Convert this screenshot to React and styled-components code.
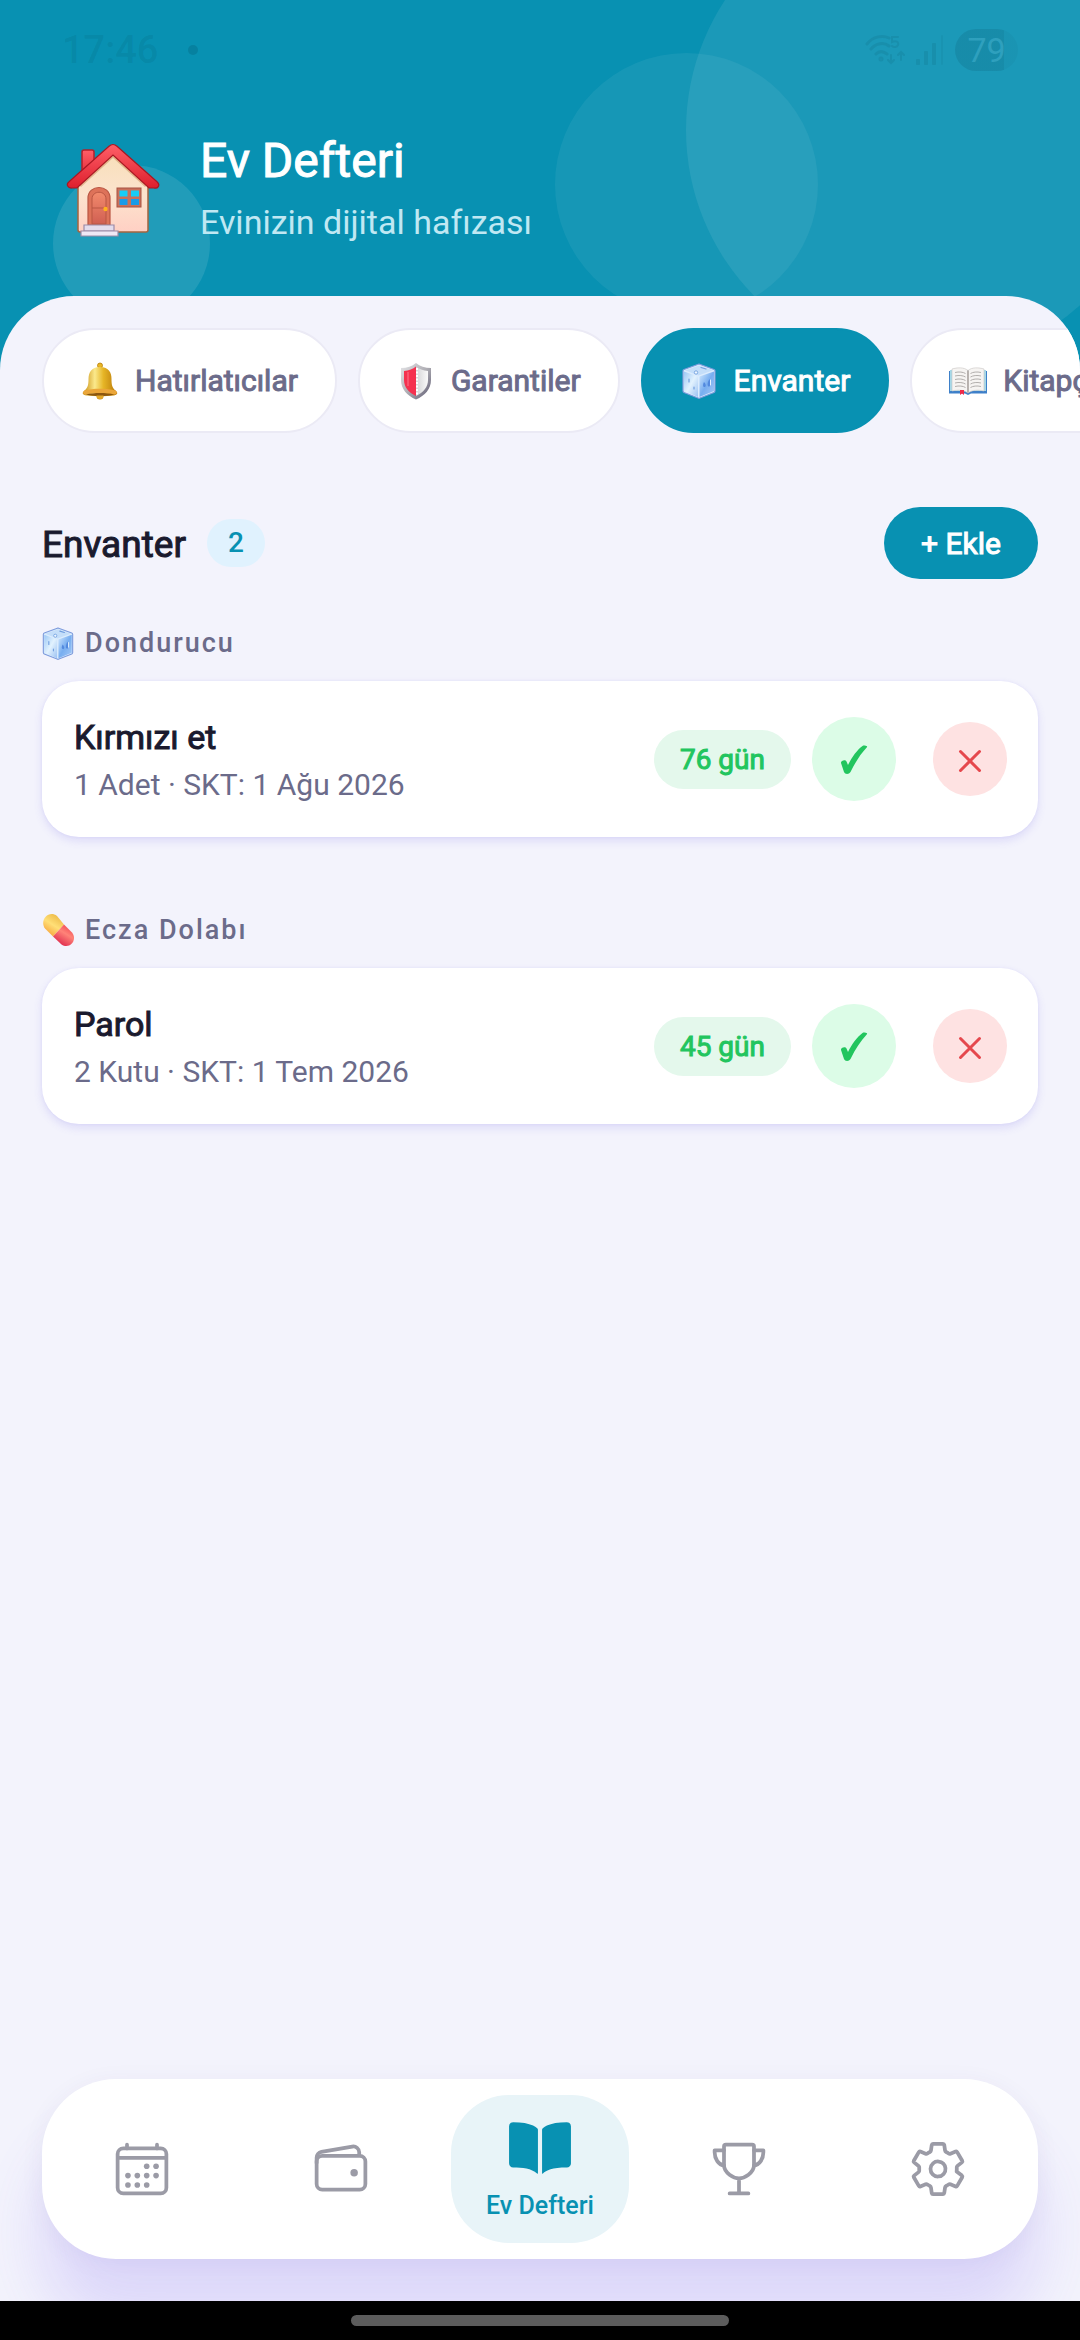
import React from "react";
import styled, { createGlobalStyle, css } from "styled-components";
import {
  IoCalendarOutline,
  IoWalletOutline,
  IoBook,
  IoTrophyOutline,
  IoSettingsOutline,
} from "react-icons/io5";

const color = {
  primary: "#0891b2",
  page: "#f3f3fc",
  ink: "#1a1a2e",
  muted: "#6b6b8a",
  line: "#ebeaf5",
  green: "#22c55e",
  red: "#e5484d",
  idle: "#9b9ba6",
};

// Regular letterforms thickened by an outline, as Android draws a bold it has no file for.
const strong = css`
  font-weight: 400;
  -webkit-text-stroke: 1px currentColor;
`;

const GlobalStyle = createGlobalStyle`
  * { box-sizing: border-box; }
  body {
    margin: 0;
    background: ${color.page};
    font-family: Roboto, "Noto Sans", sans-serif;
    color: ${color.ink};
  }
  h1, h2, h3, p, ul { margin: 0; padding: 0; }
  button { font: inherit; border: 0; padding: 0; cursor: pointer; }
  svg { display: block; flex: none; }
`;

const Screen = styled.div`
  display: flex;
  flex-direction: column;
  min-height: 100vh;
  overflow: hidden;
`;

const Header = styled.header`
  position: relative;
  overflow: hidden;
  background: ${color.primary};
  padding: 28px 62px 131px;
`;

const Bubble = styled.span`
  position: absolute;
  width: ${(p) => p.$size}px;
  height: ${(p) => p.$size}px;
  top: ${(p) => p.$top}px;
  left: ${(p) => (p.$left === undefined ? "auto" : `${p.$left}px`)};
  right: ${(p) => (p.$right === undefined ? "auto" : `${p.$right}px`)};
  border-radius: 50%;
  background: rgba(255, 255, 255, ${(p) => p.$alpha});
`;

const StatusBar = styled.div`
  position: relative;
  display: flex;
  align-items: center;
  justify-content: space-between;
  height: 44px;
  color: rgba(0, 60, 80, 0.11);
`;

const StatusGroup = styled.div`
  display: flex;
  align-items: center;
  gap: ${(p) => p.$gap}px;
`;

const Clock = styled.time`
  font-size: 38px;
  font-weight: 500;
  line-height: 44px;
`;

const StatusDot = styled.span`
  width: 10px;
  height: 10px;
  border-radius: 50%;
  background: rgba(0, 60, 80, 0.18);
`;

const Battery = styled.span`
  display: flex;
  align-items: center;
  justify-content: center;
  width: 63px;
  height: 42px;
  border-radius: 21px;
  background: linear-gradient(90deg, rgba(0, 60, 80, 0.14) 78%, rgba(0, 60, 80, 0.05) 78%);
  color: rgba(70, 180, 210, 0.5);
  font-size: 34px;
`;

const Brand = styled.div`
  position: relative;
  display: flex;
  align-items: flex-end;
  gap: 34px;
  margin-top: 55px;
`;

const BrandText = styled.div`
  display: flex;
  flex-direction: column;
  gap: 10px;
`;

const AppTitle = styled.h1`
  ${strong}
  font-size: 48px;
  line-height: 68px;
  color: #fff;
`;

const Tagline = styled.p`
  font-size: 34px;
  line-height: 34px;
  color: #c0e8f3;
`;

const Sheet = styled.main`
  position: relative;
  flex: 1;
  margin-top: -74px;
  padding-top: 32px;
  border-radius: 74px 74px 0 0;
  background: ${color.page};
  overflow: hidden;
`;

const Tabs = styled.nav`
  display: flex;
  gap: 21px;
  padding: 0 42px;
  overflow-x: auto;
  scrollbar-width: none;
`;

const Tab = styled.button`
  ${strong}
  display: flex;
  align-items: center;
  flex: none;
  gap: 16px;
  height: 105px;
  padding: 0 37px;
  border: 2px solid ${(p) => (p.$active ? color.primary : color.line)};
  border-radius: 53px;
  background: ${(p) => (p.$active ? color.primary : "#fff")};
  color: ${(p) => (p.$active ? "#fff" : color.muted)};
  font-size: 30px;
`;

const Content = styled.div`
  padding: 74px 42px 42px;
`;

const SectionHead = styled.div`
  display: flex;
  align-items: center;
  justify-content: space-between;
`;

const SectionName = styled.div`
  display: flex;
  align-items: center;
  gap: 21px;
`;

const SectionTitle = styled.h2`
  ${strong}
  padding-top: 4px;
  font-size: 37px;
  line-height: 44px;
`;

const Count = styled.span`
  padding: 0 21px;
  border-radius: 24px;
  background: #e0f2fe;
  color: ${color.primary};
  font-size: 28px;
  font-weight: 500;
  line-height: 48px;
`;

const AddButton = styled.button`
  ${strong}
  height: 72px;
  padding: 0 37px;
  border-radius: 36px;
  background: ${color.primary};
  color: #fff;
  font-size: 30px;
`;

const Group = styled.section`
  margin-top: ${(p) => (p.$first ? 44 : 73)}px;
`;

const GroupLabel = styled.h3`
  display: flex;
  align-items: center;
  gap: 11px;
  margin-bottom: 18px;
  font-size: 27px;
  font-weight: 500;
  line-height: 40px;
  letter-spacing: 2px;
  color: ${color.muted};
`;

const Card = styled.article`
  display: flex;
  align-items: center;
  padding: 33px 31px 33px 32px;
  border-radius: 37px;
  background: #fff;
  box-shadow: 0 4px 8px rgba(108, 92, 231, 0.16), 0 0 3px rgba(108, 92, 231, 0.08);
`;

const CardText = styled.div`
  flex: 1;
  min-width: 0;
`;

const CardTitle = styled.p`
  ${strong}
  font-size: 34px;
  line-height: 46px;
`;

const CardMeta = styled.p`
  margin-top: 6px;
  font-size: 30px;
  line-height: 38px;
  color: ${color.muted};
`;

const DaysLeft = styled.span`
  ${strong}
  padding: 0 26px;
  border-radius: 30px;
  background: #e4f8ec;
  color: ${color.green};
  font-size: 28px;
  line-height: 59px;
`;

const RoundButton = styled.button`
  display: flex;
  align-items: center;
  justify-content: center;
  width: ${(p) => p.$size}px;
  height: ${(p) => p.$size}px;
  margin-left: ${(p) => p.$gap}px;
  border-radius: 50%;
  background: ${(p) => p.$bg};
`;

const Dock = styled.nav`
  position: relative;
  display: grid;
  grid-template-columns: repeat(5, 1fr);
  height: 180px;
  margin: 0 42px 42px;
  border-radius: 74px;
  background: #fff;
  box-shadow: 0 64px 60px rgba(108, 72, 240, 0.16), 0 4px 24px rgba(60, 50, 120, 0.06);
`;

const DockItem = styled.button`
  display: flex;
  flex-direction: column;
  align-items: center;
  justify-content: center;
  gap: 8px;
  margin: 16px 11px;
  border-radius: 58px;
  background: ${(p) => (p.$active ? "#e8f4f8" : "transparent")};
  color: ${(p) => (p.$active ? color.primary : color.idle)};
`;

const DockLabel = styled.span`
  font-size: 25px;
  font-weight: 500;
  line-height: 32px;
`;

const GestureBar = styled.footer`
  position: relative;
  display: flex;
  align-items: center;
  justify-content: center;
  height: 39px;
  background: #000;
`;

const GestureHandle = styled.span`
  width: 35%;
  height: 11px;
  border-radius: 6px;
  background: #5c5c5c;
`;

function WifiIcon() {
  return (
    <svg width="40" height="32" viewBox="0 0 40 32" fill="none" stroke="currentColor" strokeWidth="3" strokeLinecap="round">
      <path d="M2 10C8 2 18 1 24 4M6 15c5-6 13-7 18-3M11 20c3-3 7-3 11 0" />
      <circle cx="16" cy="25" r="1" />
      <path d="M26 21v8m-3-3 3 3 3-3M36 26v-8m-3 3 3-3 3 3M33 3h-6v5c4-2 7 0 6 3-1 2-4 3-6 1" strokeWidth="2" />
    </svg>
  );
}

function SignalIcon() {
  return (
    <svg width="28" height="32" viewBox="0 0 28 32" fill="currentColor">
      <rect x="0" y="25" width="4" height="6" rx="1" />
      <rect x="8" y="17" width="4" height="14" rx="1" />
      <rect x="16" y="9" width="4" height="22" rx="1" />
      <rect x="25" y="1" width="2" height="30" rx="1" opacity="0.5" />
    </svg>
  );
}

function HouseIcon() {
  return (
    <svg width="104" height="96" viewBox="0 0 104 96" aria-hidden="true">
      <defs>
        <linearGradient id="wall" x1="0" y1="0" x2="0" y2="1">
          <stop offset="0" stopColor="#f7dfb9" />
          <stop offset="0.55" stopColor="#fce3cd" />
          <stop offset="1" stopColor="#ffd0c4" />
        </linearGradient>
        <linearGradient id="roof" x1="0" y1="0" x2="0" y2="1">
          <stop offset="0" stopColor="#ff5f68" />
          <stop offset="1" stopColor="#dd1f2d" />
        </linearGradient>
        <linearGradient id="door" x1="0" y1="0" x2="0" y2="1">
          <stop offset="0" stopColor="#f28a6c" />
          <stop offset="1" stopColor="#d05f52" />
        </linearGradient>
      </defs>
      <path d="M20 9a2 2 0 0 1 2-2h8a2 2 0 0 1 2 2v18L20 38z" fill="url(#roof)" stroke="#b3202a" strokeWidth="1.5" />
      <path d="M51 8 86 41v46a2 2 0 0 1-2 2H18a2 2 0 0 1-2-2V41z" fill="url(#wall)" stroke="#a4643f" strokeWidth="1.5" />
      <path d="M18 43 51 13l33 30" fill="none" stroke="#c98a56" strokeWidth="3" opacity="0.5" />
      <path d="M51 1.500c1.500 0 2.800.6 4 1.700l40 35.500c4 3.800.5 7.300-3 6.300h-5L51 12 15 45h-5c-4 .5-6.500-3.500-3-6.300L47 3.200c1.200-1.100 2.500-1.700 4-1.700z" fill="url(#roof)" stroke="#a81722" strokeWidth="1.200" />
      <path d="M26 82V55c0-14 22-14 22 0v27z" fill="#dd7259" stroke="#b95643" strokeWidth="1.200" />
      <path d="M30 81V56c0-9 14-9 14 0v25z" fill="url(#door)" stroke="#b95643" strokeWidth="1" />
      <path d="M30 65h14" stroke="#b95643" strokeWidth="1" />
      <circle cx="43.500" cy="66" r="2.200" fill="#ffb01f" />
      <rect x="55" y="45" width="24" height="19" fill="#c9705a" stroke="#a85342" strokeWidth="1" />
      <path d="M57.500 47.500h8v6h-8zM69 47.500h8v6h-8z" fill="#18cdf5" />
      <path d="M57.500 56h8v6h-8zM69 56h8v6h-8z" fill="#199be8" />
      <path d="M22 82h30v6H22z" fill="#e4dcec" stroke="#9c8ba8" strokeWidth="1.200" />
      <path d="M19 88h37v5H19z" fill="#efe8f5" stroke="#9c8ba8" strokeWidth="1.200" />
    </svg>
  );
}

function BellIcon() {
  return (
    <svg width="38" height="38" viewBox="0 0 38 38" aria-hidden="true">
      <defs>
        <linearGradient id="bell" x1="0" y1="0" x2="1" y2="0">
          <stop offset="0" stopColor="#c78a0c" />
          <stop offset="0.35" stopColor="#fbe98c" />
          <stop offset="0.6" stopColor="#e6b526" />
          <stop offset="1" stopColor="#b87708" />
        </linearGradient>
      </defs>
      <circle cx="19" cy="3.500" r="2.500" fill="#e9b625" stroke="#b67d0a" strokeWidth="0.800" />
      <circle cx="19" cy="34" r="3.500" fill="#c98a15" />
      <path d="M19 5c9 0 11.500 6 11.500 12 0 5 .5 9 4 11.500 3 2.500 2 4.500-2 5-7 1-20 1-27 0-4-.5-5-2.500-2-5C7 26 7.500 22 7.500 17 7.500 11 10 5 19 5z" fill="url(#bell)" />
      <path d="M3.500 28.500c8-2.500 23-2.500 31 0 2.500 2 1.500 3.500-1 4-8-2-21-2-29 0-2.500-.5-3.500-2-1-4z" fill="#eba63a" />
      <path d="M5 32.500c8-2 20-2 28 0-7 2.200-21 2.200-28 0z" fill="#8c560f" />
      <path d="M15.500 33.500h7a3.500 3.500 0 0 1-7 0z" fill="#e3a82b" />
    </svg>
  );
}

function ShieldIcon() {
  return (
    <svg width="38" height="38" viewBox="0 0 38 38" aria-hidden="true">
      <defs>
        <linearGradient id="steel" x1="0" y1="0" x2="1" y2="1">
          <stop offset="0" stopColor="#e6e6e9" />
          <stop offset="0.5" stopColor="#b0afb5" />
          <stop offset="1" stopColor="#5c5870" />
        </linearGradient>
        <linearGradient id="silver" x1="0" y1="0" x2="1" y2="0">
          <stop offset="0" stopColor="#d4d4d6" />
          <stop offset="1" stopColor="#fafafa" />
        </linearGradient>
      </defs>
      <path d="M19 1c4 3.500 9 5 15 5v12c0 9-6 15.500-15 19.500C10 33.500 4 27 4 18V6c6 0 11-1.500 15-5z" fill="url(#steel)" />
      <path d="M19 4.500v29.500C11.500 30.500 7 25 7 18V9c5-.3 9-2 12-4.500z" fill="#f5314f" />
      <path d="M19 4.500c3 2.500 7 4.200 12 4.500v9c0 7-4.500 12.500-12 16z" fill="url(#silver)" />
      <path d="M20 6v27" stroke="#fff" strokeWidth="2" strokeDasharray="2 1.500" />
      <path d="M11 10v14" stroke="#ff7388" strokeWidth="1.500" opacity="0.700" />
    </svg>
  );
}

function IceIcon({ width, height }) {
  return (
    <svg width={width} height={height} viewBox="0 0 34 36" aria-hidden="true">
      <defs>
        <linearGradient id="iceL" x1="0" y1="0" x2="1" y2="1">
          <stop offset="0" stopColor="#9cc8f5" />
          <stop offset="0.5" stopColor="#e2f2fe" />
          <stop offset="1" stopColor="#9cc2f2" />
        </linearGradient>
        <linearGradient id="iceR" x1="0" y1="0" x2="1" y2="1">
          <stop offset="0" stopColor="#d2e9fe" />
          <stop offset="0.5" stopColor="#78aef0" />
          <stop offset="1" stopColor="#a4c8f6" />
        </linearGradient>
      </defs>
      <path d="M17 1 32 6.500a1.500 1.500 0 0 1 1 1.500v20a2 2 0 0 1-1 1.500L18 35a2 2 0 0 1-2 0L2 29.500A2 2 0 0 1 1 28V8a1.500 1.500 0 0 1 1-1.500z" fill="#dcecfd" stroke="#7d9bdc" strokeWidth="1.200" strokeLinejoin="round" />
      <path d="M2 8.500 16 13.500V34L2 28z" fill="url(#iceL)" />
      <path d="M17.500 13.500 32 8.500V28L17.500 34z" fill="url(#iceR)" />
      <path d="M17 2.500 31 7.300 16.500 12.500 3 7.300z" fill="#c4def9" />
      <circle cx="14" cy="9.500" r="1.700" fill="#eef7ff" stroke="#6697db" strokeWidth="0.800" />
      <path d="M19 4.500l5 1.500M7 16v3M12 24v2" stroke="#709edf" strokeWidth="1.200" strokeLinecap="round" />
      <path d="M22 19c-1.500 3-1 5 .5 5s2-2.500-.5-5zM27.500 16c-2 3-2.500 6.500-1 7.500s3-3 1-7.500z" fill="#5289de" />
      <path d="M28.500 17v5" stroke="#e5f3ff" strokeWidth="1" strokeLinecap="round" />
    </svg>
  );
}

function OpenBookIcon() {
  return (
    <svg width="38" height="38" viewBox="0 0 38 38" aria-hidden="true">
      <path d="M0 9h38v22.500H22l-3 1.500-3-1.500H0z" fill="#3e80c9" />
      <path d="M1 8h36v21H1z" fill="#a6d9e8" />
      <path d="M19 8.500C15 5 8 5.500 3 7v22c6-1.500 12-1 16 2z" fill="#f6f4f2" stroke="#c8c4c2" strokeWidth="0.600" />
      <path d="M19 8.500C23 5 30 5.500 35 7v22c-6-1.500-12-1-16 2z" fill="#f6f4f2" stroke="#c8c4c2" strokeWidth="0.600" />
      <path d="M6 10.500c4-1 8-.5 10.500 1M6 14c4-1 8-.5 10.500 1M6 17.500c4-1 8-.5 10.500 1M6 21c4-1 8-.5 10.500 1M6 24.500c4-1 8-.5 10.500 1M32 10.500c-4-1-8-.5-10.500 1M32 14c-4-1-8-.5-10.500 1M32 17.500c-4-1-8-.5-10.500 1M32 21c-4-1-8-.5-10.500 1M32 24.500c-4-1-8-.5-10.500 1" fill="none" stroke="#a9a6a4" strokeWidth="0.900" />
      <path d="M19 8.500v22" stroke="#aaa39f" strokeWidth="1.500" />
      <path d="M11 28h4v5l-2-1.500-2 1.500z" fill="#ef2b49" />
    </svg>
  );
}

function PillIcon() {
  return (
    <svg width="32" height="34" viewBox="0 0 32 34" aria-hidden="true">
      <defs>
        <linearGradient id="pillTop" x1="0.800" y1="0" x2="0.200" y2="1">
          <stop offset="0" stopColor="#e9b33f" />
          <stop offset="0.5" stopColor="#ffdf77" />
          <stop offset="1" stopColor="#f59a33" />
        </linearGradient>
        <linearGradient id="pillLow" x1="0.800" y1="0" x2="0.200" y2="1">
          <stop offset="0" stopColor="#f0404e" />
          <stop offset="0.4" stopColor="#ff8378" />
          <stop offset="1" stopColor="#d81845" />
        </linearGradient>
      </defs>
      <path d="M22 11.500 11 23.500 3 15.500C-3 7 7-3.500 15 3z" fill="url(#pillTop)" />
      <path d="M22 11.500 11 23.500l8.500 8C27.500 37 36 27 30 19.500z" fill="url(#pillLow)" />
    </svg>
  );
}

function CheckIcon() {
  return (
    <svg width="28" height="38" viewBox="0 0 28 38" aria-hidden="true">
      <path d="M1 23c-.5-2.500 4.500-4 5.500-1.500L8 25C12 17 17 10 22.500 6c1-.8 1.500-.4 2.300-.5.800-.1 1 .6 1.700.4.800 0 .8 1 .2 1.600C20.500 14 15.500 22 10.500 32c-1.500 2.500-5.500 2.500-6.500 0z" fill={color.green} />
    </svg>
  );
}

function CrossIcon() {
  return (
    <svg width="24" height="28" viewBox="0 0 24 28" aria-hidden="true">
      <path d="M2.500 6.500l19 19M21.500 6.500l-19 19" stroke={color.red} strokeWidth="3" strokeLinecap="round" />
    </svg>
  );
}

const tabs = [
  { label: "Hatırlatıcılar", icon: <BellIcon /> },
  { label: "Garantiler", icon: <ShieldIcon /> },
  { label: "Envanter", icon: <IceIcon width={38} height={36} />, active: true },
  { label: "Kitapçıklar", icon: <OpenBookIcon /> },
];

const groups = [
  {
    label: "Dondurucu",
    icon: <IceIcon width={32} height={33} />,
    items: [{ name: "Kırmızı et", meta: "1 Adet · SKT: 1 Ağu 2026", left: "76 gün" }],
  },
  {
    label: "Ecza Dolabı",
    icon: <PillIcon />,
    items: [{ name: "Parol", meta: "2 Kutu · SKT: 1 Tem 2026", left: "45 gün" }],
  },
];

const dock = [
  { name: "Takvim", Icon: IoCalendarOutline },
  { name: "Cüzdan", Icon: IoWalletOutline },
  { name: "Ev Defteri", Icon: IoBook, active: true },
  { name: "Başarılar", Icon: IoTrophyOutline },
  { name: "Ayarlar", Icon: IoSettingsOutline },
];

function InventoryItem({ item }) {
  return (
    <Card>
      <CardText>
        <CardTitle>{item.name}</CardTitle>
        <CardMeta>{item.meta}</CardMeta>
      </CardText>
      <DaysLeft>{item.left}</DaysLeft>
      <RoundButton $size={84} $gap={21} $bg="#dcfce7" aria-label="Kullanıldı">
        <CheckIcon />
      </RoundButton>
      <RoundButton $size={74} $gap={37} $bg="#fee2e2" aria-label="Sil">
        <CrossIcon />
      </RoundButton>
    </Card>
  );
}

export default function App() {
  return (
    <>
      <GlobalStyle />
      <Screen>
        <Header>
          <Bubble $size={472} $top={-106} $right={-78} $alpha={0.08} />
          <Bubble $size={263} $top={53} $right={262} $alpha={0.06} />
          <Bubble $size={157} $top={165} $left={53} $alpha={0.1} />
          <StatusBar>
            <StatusGroup $gap={30}>
              <Clock>17:46</Clock>
              <StatusDot />
            </StatusGroup>
            <StatusGroup $gap={11}>
              <WifiIcon />
              <SignalIcon />
              <Battery>79</Battery>
            </StatusGroup>
          </StatusBar>
          <Brand>
            <HouseIcon />
            <BrandText>
              <AppTitle>Ev Defteri</AppTitle>
              <Tagline>Evinizin dijital hafızası</Tagline>
            </BrandText>
          </Brand>
        </Header>
        <Sheet>
          <Tabs>
            {tabs.map((t) => (
              <Tab key={t.label} $active={t.active}>
                {t.icon}
                {t.label}
              </Tab>
            ))}
          </Tabs>
          <Content>
            <SectionHead>
              <SectionName>
                <SectionTitle>Envanter</SectionTitle>
                <Count>2</Count>
              </SectionName>
              <AddButton>+ Ekle</AddButton>
            </SectionHead>
            {groups.map((g, i) => (
              <Group key={g.label} $first={i === 0}>
                <GroupLabel>
                  {g.icon}
                  {g.label}
                </GroupLabel>
                {g.items.map((item) => (
                  <InventoryItem key={item.name} item={item} />
                ))}
              </Group>
            ))}
          </Content>
        </Sheet>
        <Dock>
          {dock.map(({ name, Icon, active }) => (
            <DockItem key={name} $active={active} aria-label={name}>
              <Icon size={active ? 66 : 60} />
              {active && <DockLabel>{name}</DockLabel>}
            </DockItem>
          ))}
        </Dock>
        <GestureBar>
          <GestureHandle />
        </GestureBar>
      </Screen>
    </>
  );
}
